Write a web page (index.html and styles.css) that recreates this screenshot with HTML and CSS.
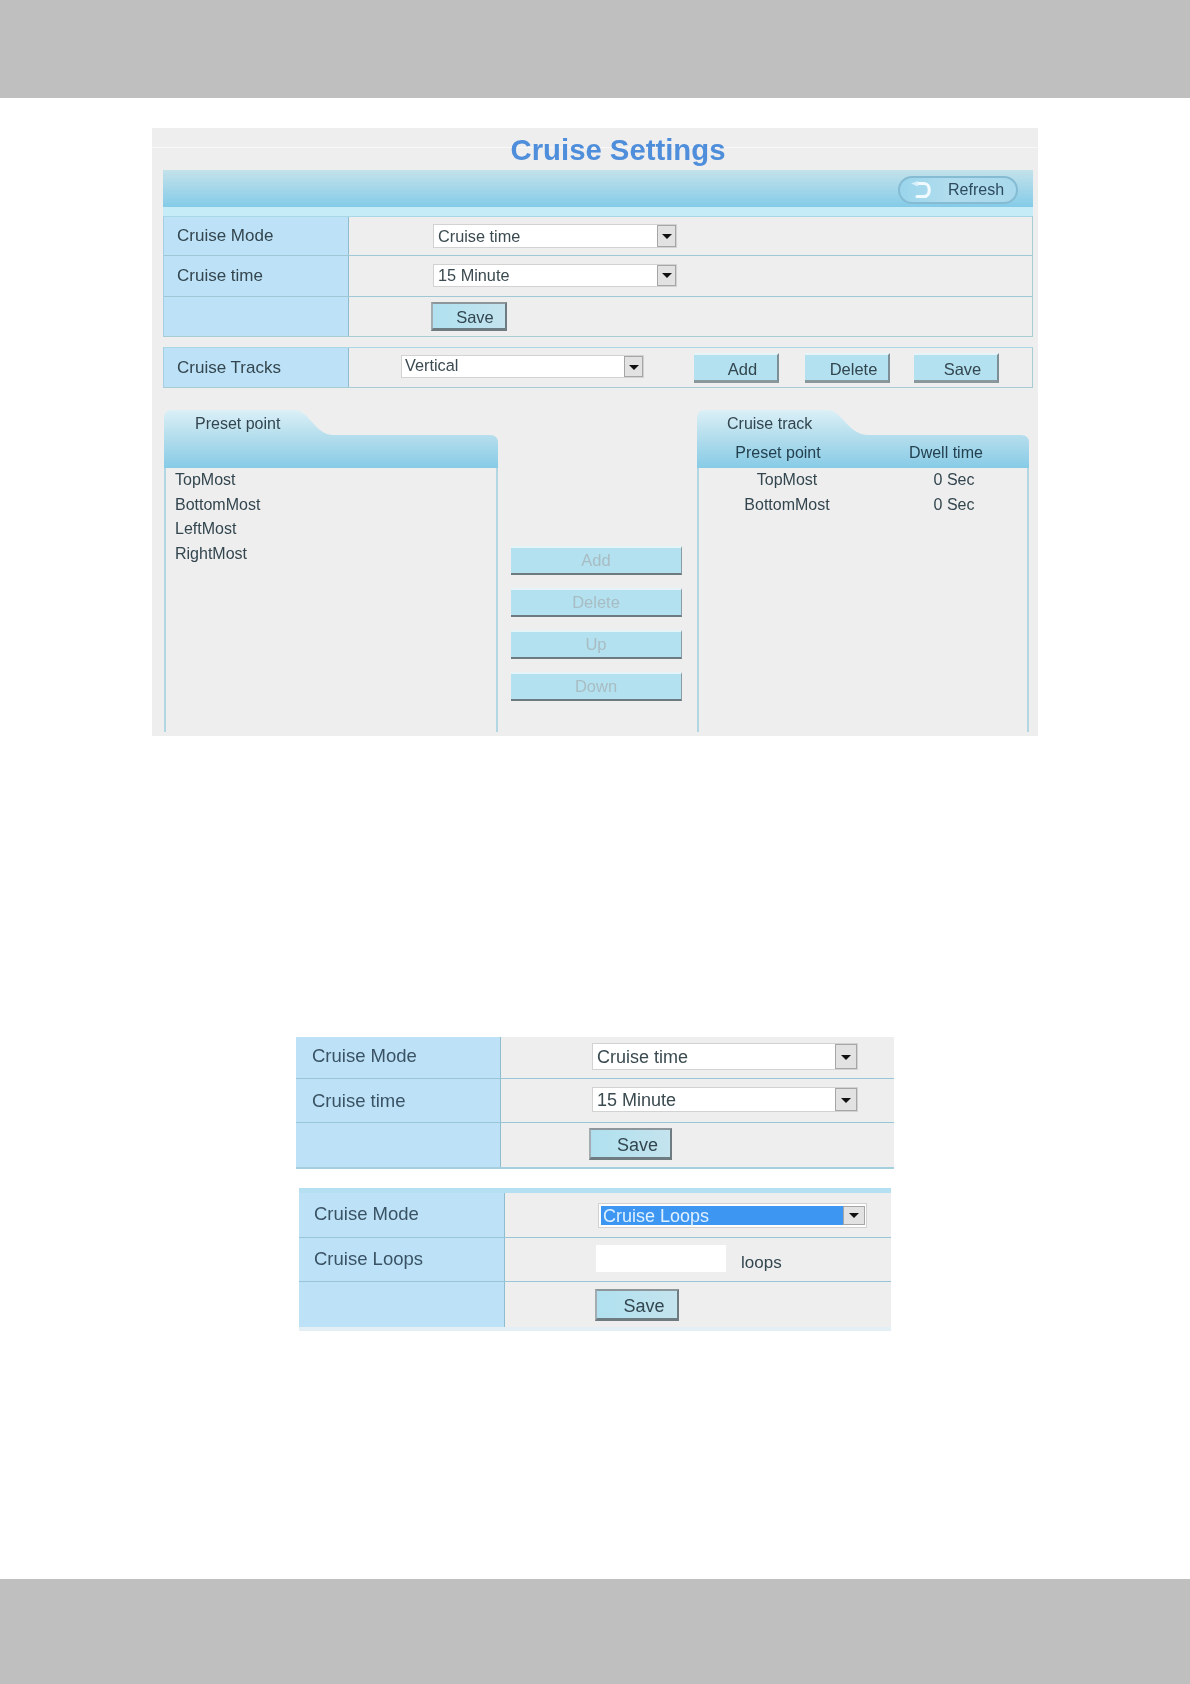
FILE: index.html
```html
<!DOCTYPE html>
<html lang="en">
<head>
<meta charset="utf-8">
<title>Cruise Settings</title>
<link rel="stylesheet" href="styles.css">
</head>
<body>
<header class="band band-top"></header>
<main class="page">
  <section class="panel">
    <h1 class="title">Cruise Settings</h1>
    <div class="toolbar">
      <div class="refresh">
        <svg class="refresh-icon" width="34" height="20" viewBox="0 0 34 20"><path d="M13 3.5 H20 C27 3.5 27 16.5 20 16.5 H13" fill="none" stroke="#f0faff" stroke-width="3.2" stroke-linecap="round"/><path d="M7 3.5 L14 1 V6.5 Z" fill="#d8f0fa"/></svg>
        <span>Refresh</span>
      </div>
    </div>
    <div class="stripe"></div>
    <div class="form">
      <div class="row r39"><div class="label">Cruise Mode</div><div class="value v84"><div class="select w244 h24"><span class="sel-text">Cruise time</span><span class="sel-arrow"></span></div></div></div>
      <div class="row r41"><div class="label">Cruise time</div><div class="value v84"><div class="select w244 h23 up1"><span class="sel-text">15 Minute</span><span class="sel-arrow"></span></div></div></div>
      <div class="row r39"><div class="label"></div><div class="value v82"><div class="btn btn-save">Save</div></div></div>
    </div>
    <div class="form form-tracks">
      <div class="row r40 tracks"><div class="label">Cruise Tracks</div><div class="value v52"><div class="select w243 h23 up1"><span class="sel-text tight">Vertical</span><span class="sel-arrow"></span></div><div class="track-btns"><div class="btn btn-flat">Add</div><div class="btn btn-flat">Delete</div><div class="btn btn-flat">Save</div></div></div></div>
    </div>
    <div class="lists">
      <div class="list list-left">
        <div class="list-head">
          <svg class="tab-shape" width="334" height="58" viewBox="0 0 334 58" preserveAspectRatio="none"><defs><linearGradient id="g1" x1="0" y1="0" x2="0" y2="1"><stop offset="0" stop-color="#dcf0f7"/><stop offset=".45" stop-color="#b5deed"/><stop offset="1" stop-color="#87cbe6"/></linearGradient></defs><path d="M0 58 V8 Q0 0 8 0 H130 C146 0 150 25 170 25 H326 Q334 25 334 33 V58 Z" fill="url(#g1)"/></svg>
          <div class="tab-label tl-left">Preset point</div>
        </div>
        <ul class="items">
          <li>TopMost</li><li>BottomMost</li><li>LeftMost</li><li>RightMost</li>
        </ul>
      </div>
      <div class="mid">
        <div class="btn btn-off">Add</div>
        <div class="btn btn-off">Delete</div>
        <div class="btn btn-off">Up</div>
        <div class="btn btn-off">Down</div>
      </div>
      <div class="list list-right">
        <div class="list-head">
          <svg class="tab-shape" width="332" height="58" viewBox="0 0 332 58" preserveAspectRatio="none"><defs><linearGradient id="g2" x1="0" y1="0" x2="0" y2="1"><stop offset="0" stop-color="#dcf0f7"/><stop offset=".45" stop-color="#b5deed"/><stop offset="1" stop-color="#87cbe6"/></linearGradient></defs><path d="M0 58 V8 Q0 0 8 0 H130 C146 0 150 25 172 25 H324 Q332 25 332 33 V58 Z" fill="url(#g2)"/></svg>
          <div class="tab-label tl-right">Cruise track</div>
          <div class="track-cols"><span class="c1">Preset point</span><span class="c2">Dwell time</span></div>
        </div>
        <div class="track-rows">
          <div class="track-row"><span class="c1">TopMost</span><span class="c2">0 Sec</span></div>
          <div class="track-row"><span class="c1">BottomMost</span><span class="c2">0 Sec</span></div>
        </div>
      </div>
    </div>
  </section>

  <section class="crop crop-a">
    <div class="lrow h42"><div class="llabel">Cruise Mode</div><div class="lvalue"><div class="select big w266 h27 up1"><span class="sel-text">Cruise time</span><span class="sel-arrow"></span></div></div></div>
    <div class="lrow h44"><div class="llabel">Cruise time</div><div class="lvalue"><div class="select big w266 h25 up1"><span class="sel-text">15 Minute</span><span class="sel-arrow"></span></div></div></div>
    <div class="lrow h44 last"><div class="llabel"></div><div class="lvalue"><div class="btn btn-save big-save s1">Save</div></div></div>
  </section>

  <section class="crop crop-b">
    <div class="lrow h45"><div class="llabel">Cruise Mode</div><div class="lvalue"><div class="select big sel-on w269 h25"><span class="sel-text">Cruise Loops</span><span class="sel-arrow"></span></div></div></div>
    <div class="lrow h44"><div class="llabel">Cruise Loops</div><div class="lvalue loops-cell"><div class="field"></div><span class="loops">loops</span></div></div>
    <div class="lrow h45 last"><div class="llabel"></div><div class="lvalue"><div class="btn btn-save big-save s2">Save</div></div></div>
  </section>
</main>
<footer class="band band-bottom"></footer>
</body>
</html>
```
FILE: styles.css
```css
* { box-sizing: border-box; }
html, body { margin: 0; padding: 0; }
body {
  width: 1190px;
  height: 1684px;
  background: #fff;
  display: flex;
  flex-direction: column;
  font-family: "Liberation Sans", Arial, sans-serif;
  color: #33464f;
  overflow: hidden;
}
.band { background: #bfbfbf; flex: none; }
.band-top { height: 98px; }
.band-bottom { height: 105px; }
.page { flex: 1; display: flex; flex-direction: column; padding-top: 30px; }

/* Upper screenshot */
.panel {
  width: 886px;
  height: 608px;
  margin-left: 152px;
  padding: 0 5px 0 11px;
  background: #eeeeee;
  overflow: hidden;
  filter: blur(.5px);
}
.title {
  height: 42px;
  margin: 0 -5px 0 -11px;
  padding-left: 46px;
  font-size: 29.3px;
  line-height: 44px;
  font-weight: 700;
  text-align: center;
  color: #4f8edb;
  background: linear-gradient(#eeeeee 19px, #f8f8f8 19px, #f8f8f8 20px, #efeeee 20px);
}
.toolbar {
  height: 37px;
  display: flex;
  justify-content: flex-end;
  align-items: center;
  padding-right: 15px;
  background: linear-gradient(#c3e2ea, #84cbe8);
}
.refresh {
  width: 120px;
  height: 28px;
  margin-top: 3px;
  display: flex;
  align-items: center;
  padding-left: 4px;
  border: 2px solid #85bbd3;
  border-radius: 14px;
  background: linear-gradient(90deg, #9ad5ec, #b0dced 40%, #a9d9ec);
  font-size: 16px;
  color: #2d4a5e;
}
.refresh-icon { flex: none; }
.refresh span { margin-left: 10px; }
.stripe { height: 9px; background: #c6edf7; }
.form {
  border: 1px solid #a6cdd4;
  border-top-color: #a8d8e6;
  border-left-color: #a4d0e2;
}
.form-tracks { margin-top: 10px; }
.row { display: flex; border-bottom: 1px solid #9fc8d5; }
.row:last-child { border-bottom: 0; }
.r39 { height: 39px; }
.r40 { height: 39px; }
.r41 { height: 41px; }
.label {
  width: 185px;
  flex: none;
  display: flex;
  align-items: center;
  padding-left: 13px;
  background: #bde2f7;
  border-right: 1px solid #8fbdd0;
  font-size: 17px;
}
.value { flex: 1; display: flex; align-items: center; }
.v84 { padding-left: 84px; }
.v82 { padding-left: 82px; }
.v52 { padding-left: 52px; }

.select {
  display: flex;
  flex: none;
  background: #fff;
  border: 1px solid #d2d2d2;
  font-size: 16.3px;
}
.up1 { margin-top: -2px; }
.sel-text { flex: 1; padding-left: 4px; line-height: 20px; color: #3a4a50; align-self: center; }
.tight { padding-left: 3px; margin-top: -3px; }
.sel-arrow {
  width: 19px;
  flex: none;
  background: #e2e2e2;
  border: 1px solid #a6a6a6;
  position: relative;
}
.sel-arrow::after {
  content: "";
  position: absolute;
  left: 4px;
  top: 50%;
  margin-top: -2px;
  border: 5px solid transparent;
  border-top: 5px solid #111;
  border-bottom: 0;
}
.w244 { width: 244px; }
.w243 { width: 243px; }
.w266 { width: 266px; }
.w269 { width: 269px; }
.h23 { height: 23px; }
.h24 { height: 24px; }
.h25 { height: 25px; }
.h27 { height: 27px; }

.btn {
  display: flex;
  align-items: center;
  justify-content: center;
  flex: none;
  font-size: 16.5px;
}
.btn-save {
  width: 76px;
  height: 29px;
  padding: 3px 0 0 12px;
  background: linear-gradient(90deg, #b0e0ef, #c4e4ee);
  border: 2px solid #6e7b80;
  border-top-color: #8d979b;
  border-left-color: #a3adb1;
  border-bottom-width: 3px;
}
.track-btns { display: flex; margin-left: 50px; }
.btn-flat {
  width: 85px;
  height: 30px;
  padding: 5px 0 0 14px;
  margin-right: 26px;
  background: #b3e1ef;
  border-top: 2px solid #e6f3f7;
  border-right: 2px solid #7d8f96;
  border-bottom: 3px solid #8a979c;
}
.btn-flat:last-child { margin-left: -2px; margin-right: 0; }

/* Lists */
.lists { display: flex; margin: 22px 0 0 1px; }
.list { display: flex; flex-direction: column; height: 322px; flex: none; }
.list-left { width: 334px; }
.list-right { width: 332px; }
.list-head { display: grid; height: 58px; flex: none; }
.list-head > * { grid-area: 1 / 1; }
.tab-shape { display: block; }
.tab-label { font-size: 16px; line-height: 20px; margin-top: 4px; }
.tl-left { padding-left: 31px; }
.tl-right { padding-left: 30px; }
.items, .track-rows {
  flex: 1;
  margin: 0;
  padding: 0;
  list-style: none;
  border-left: 2px solid #b2d7e2;
  border-right: 2px solid #b2d7e2;
  font-size: 16px;
}
.items { padding-left: 9px; }
.items li { height: 24.6px; line-height: 24px; }
.mid {
  width: 171px;
  margin: 136px 15px 0 13px;
  display: flex;
  flex-direction: column;
  gap: 13.5px;
  flex: none;
}
.btn-off {
  width: 171px;
  height: 28.5px;
  background: #b3e1ef;
  color: #a8bcc3;
  border-top: 2px solid #e6f3f7;
  border-right: 1px solid #8c9ca2;
  border-bottom: 2px solid #6d7b80;
}
.track-cols {
  display: flex;
  align-items: center;
  margin-top: 33px;
  height: 20px;
  font-size: 16px;
  color: #24414f;
}
.track-cols .c1 { width: 162px; text-align: center; }
.track-cols .c2 { width: 170px; padding-left: 4px; text-align: center; }
.track-row { display: flex; height: 24.6px; line-height: 24px; }
.track-row .c1 { width: 176px; text-align: center; }
.track-row .c2 { width: 152px; padding-left: 6px; text-align: center; }

/* Lower crops */
.crop {
  background: #eeeeee;
  flex: none;
  filter: blur(.5px);
}
.crop-a { width: 598px; margin: 301px 0 0 296px; border-bottom: 2px solid #a5cfdf; }
.crop-b {
  width: 592px;
  margin: 19px 0 0 299px;
  padding-bottom: 4px;
  border-top: 5px solid #b5e0f2;
  background: linear-gradient(#eee, #eee) no-repeat top / 100% calc(100% - 4px), #e3eef5;
}
.lrow { display: flex; border-bottom: 1px solid #98c6d6; }
.lrow.last { border-bottom: 0; }
.h42 { height: 42px; }
.h44 { height: 44px; }
.h45 { height: 45px; }
.llabel {
  flex: none;
  display: flex;
  align-items: center;
  padding-left: 16px;
  background: #bde2f7;
  border-right: 1px solid #8fbdd0;
  font-size: 18.5px;
  line-height: 22px;
  color: #3a5364;
}
.crop-a .llabel { width: 205px; }
.crop-a .lrow:first-child .llabel { padding-bottom: 4px; }
.crop-b .llabel { width: 206px; padding-left: 15px; padding-bottom: 2px; }
.lvalue { flex: 1; display: flex; align-items: center; }
.crop-a .lvalue { padding-left: 91px; }
.crop-b .lvalue { padding-left: 93px; }
.big { font-size: 18px; }
.big .sel-arrow { width: 22px; }
.big .sel-arrow::after { left: 5px; }
.sel-on { padding: 2px 1px 2px 2px; }
.sel-on .sel-text { align-self: stretch; background: #3d97f2; color: #dff0ff; padding-left: 2px; line-height: 21px; }
.big-save { font-size: 18px; height: 32px; padding: 4px 0 0 14px; }
.s1 { width: 83px; margin: -2px 0 0 -3px; }
.s2 { width: 84px; margin: 0 0 0 -3px; }
.crop-b .loops-cell { padding-left: 91px; }
.field { width: 130px; height: 27px; margin-top: -3px; background: #fff; }
.loops { margin-left: 15px; margin-top: 7px; font-size: 17px; }
```
